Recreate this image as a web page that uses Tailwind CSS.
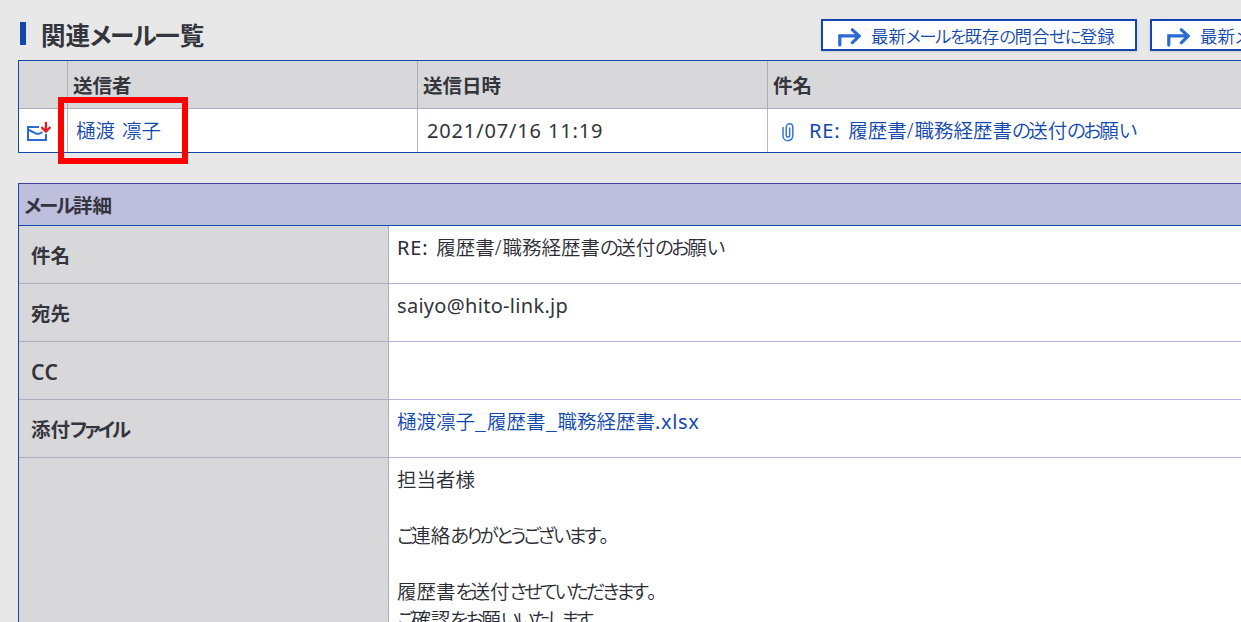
<!doctype html>
<html lang="ja">
  <head>
    <meta charset="UTF-8" />
    <meta name="viewport" content="width=device-width, initial-scale=1.0" />
    <title>関連メール一覧</title>
    <script src="https://cdn.jsdelivr.net/npm/@tailwindcss/browser@4"></script>
  </head>
  <body class="h-screen overflow-hidden bg-[#e8e8e8] font-['Noto_Sans','Noto_Sans_CJK_JP',sans-serif] text-[19.5px] leading-7 font-[350] text-[#2b2c34] whitespace-nowrap [font-feature-settings:'palt']">
    <div class="h-screen w-full overflow-hidden pl-[18px]">
      <header class="flex h-[60px] items-start">
        <div class="mt-[22px] ml-0.5 h-[23px] w-1.5 shrink-0 bg-[#1248ae]"></div>
        <h1 class="mt-[18px] ml-[15px] w-[780px] shrink-0 text-[24.5px] leading-9 font-bold text-[#33343c]">関連<span class="tracking-[-1.4px]">メール</span>一覧</h1>
        <button class="mt-[19px] flex h-8 w-[316px] shrink-0 items-center border-2 border-[#1248ae] bg-white pl-[14px] text-[17.4px] text-[#1248ae] shadow">
          <svg class="mr-2.5 size-6 shrink-0" viewBox="0 0 24 24" fill="none" stroke="#276bd3" stroke-width="3.2" stroke-linecap="round">
            <path d="M2.8 22V12.9H21M15.4 6.8l6.8 6.3-6.8 6.6" />
          </svg>
          <span class="pt-px">最新<span class="tracking-[-1.5px]">メールを</span>既存<span class="tracking-[-1.5px]">の</span>問合<span class="tracking-[-1.5px]">せに</span>登録</span>
        </button>
        <button class="mt-[19px] ml-[13px] flex h-8 w-[316px] shrink-0 items-center border-2 border-[#1248ae] bg-white pl-[14px] text-[17.4px] text-[#1248ae] shadow">
          <svg class="mr-2.5 size-6 shrink-0" viewBox="0 0 24 24" fill="none" stroke="#276bd3" stroke-width="3.2" stroke-linecap="round">
            <path d="M2.8 22V12.9H21M15.4 6.8l6.8 6.3-6.8 6.6" />
          </svg>
          <span class="pt-px">最新メール</span>
        </button>
      </header>

      <!-- mail list -->
      <section class="relative border border-r-0 border-[#1248ae]">
        <div class="grid h-12 grid-cols-[48px_350px_350px_1fr] border-b border-[#aeadbd] bg-[#d8d8da] font-bold text-[#33343c]">
          <div></div>
          <div class="border-l border-[#aeadbd] pt-[11px] pl-[5px]">送信者</div>
          <div class="border-l border-[#aeadbd] pt-[11px] pl-[5px]">送信日時</div>
          <div class="border-l border-[#aeadbd] pt-[11px] pl-[5px]">件名</div>
        </div>
        <div class="grid h-[43px] grid-cols-[48px_350px_350px_1fr] bg-white">
          <div class="pt-[13px] pl-2">
            <svg class="h-5 w-6" viewBox="0 0 24 20" fill="none">
              <path d="M12 5H1V18H19V12M2 8l7.5 3.8h2.5l3.5-1.6" stroke="#276bd3" stroke-width="2" />
              <path d="M18.9 0v9.5M14.4 5l4.5 4.5L23.4 5" stroke="#e51a23" stroke-width="2.3" />
            </svg>
          </div>
          <a class="border-l border-[#b4b0e0] pt-2 pl-2 text-[#1248ae] [word-spacing:2px]">樋渡 凛子</a>
          <div class="border-l border-[#b4b0e0] pt-2 pl-[9px] text-[20px] font-normal tracking-[0.85px] text-[#33343c]">2021/07/16 11:19</div>
          <div class="flex border-l border-[#b4b0e0] pt-2 pl-[14px] text-[#1248ae]">
            <svg class="mt-1.5 mr-[15px] h-[19px] w-3" viewBox="0 0 12 19" fill="none" stroke="#3977d6" stroke-width="1.5" stroke-linecap="round">
              <path d="M1 4.5v8.2c0 6.6 9.8 6.6 9.8 0V4.3c0-4.6-6.6-4.6-6.6 0v7.9c0 2.4 3.5 2.4 3.5 0V5" />
            </svg>
            <a><span class="text-[20px] font-normal tracking-[0.9px] [word-spacing:1.5px]">RE: </span>履歴書<span class="tracking-[1px]">/</span>職務経歴書<span class="tracking-[-2.7px]">の</span>送付<span class="tracking-[-2.7px]">のお</span>願<span class="tracking-[-2.4px]">い</span></a>
          </div>
        </div>
        <div class="absolute top-9 left-[39px] h-[67px] w-[130px] border-6 border-[#ff0000]"></div>
      </section>

      <!-- mail detail -->
      <section class="mt-[30px] border border-r-0 border-[#1248ae] border-t-[#433fa0]">
        <h2 class="h-[42px] border-b border-[#1248ae] bg-[#bebedd] pt-2 pl-[5px] font-bold text-[#33343c]"><span class="tracking-[-2.1px]">メール</span>詳細</h2>
        <div class="grid grid-cols-[370px_1fr] grid-rows-[58px_58px_58px_58px_200px]">
          <div class="border-r border-b border-[#aeadbd] bg-[#d8d8da] pt-4 pl-3 font-bold text-[#33343c]">件名</div>
          <div class="border-b border-[#b4b0e0] bg-white pt-2 pl-2"><span class="text-[20px] font-normal tracking-[0.9px] [word-spacing:1.5px]">RE: </span>履歴書<span class="tracking-[1px]">/</span>職務経歴書<span class="tracking-[-2.7px]">の</span>送付<span class="tracking-[-2.7px]">のお</span>願<span class="tracking-[-2.4px]">い</span></div>
          <div class="border-r border-b border-[#aeadbd] bg-[#d8d8da] pt-4 pl-3 font-bold text-[#33343c]">宛先</div>
          <div class="border-b border-[#b4b0e0] bg-white pt-2 pl-2 text-[20px] font-normal tracking-[0.3px] text-[#33343c]">saiyo@hito-link.jp</div>
          <div class="border-r border-b border-[#aeadbd] bg-[#d8d8da] pt-4 pl-3 text-[21px] font-semibold tracking-[0.5px] text-[#33343c]">CC</div>
          <div class="border-b border-[#b4b0e0] bg-white"></div>
          <div class="border-r border-b border-[#aeadbd] bg-[#d8d8da] pt-4 pl-3 font-bold text-[#33343c]">添付<span class="tracking-[-2.8px]">ファイル</span></div>
          <a class="border-b border-[#b4b0e0] bg-white pt-2 pl-2 text-[#1248ae]">樋渡凛子<span class="inline-block w-3 origin-left scale-x-130">_</span>履歴書<span class="inline-block w-3 origin-left scale-x-130">_</span>職務経歴書<span class="text-[20px] font-normal tracking-[0.6px]">.xlsx</span></a>
          <div class="border-r border-[#aeadbd] bg-[#d8d8da]"></div>
          <div class="bg-white pt-2 pl-2">
            <p>担当者様</p>
            <p class="mt-7"><span class="tracking-[-2.9px]">ご</span>連絡<span class="tracking-[-2.9px]">ありがとうございま</span>す。</p>
            <p class="mt-7">履歴書<span class="tracking-[-3px]">を</span>送付<span class="tracking-[-3px]">させていただきま</span>す。</p>
            <p><span class="tracking-[-2.9px]">ご</span>確認<span class="tracking-[-2.9px]">をお</span>願<span class="tracking-[-2.9px]">いいたしま</span>す。</p>
          </div>
        </div>
      </section>
    </div>
  </body>
</html>
